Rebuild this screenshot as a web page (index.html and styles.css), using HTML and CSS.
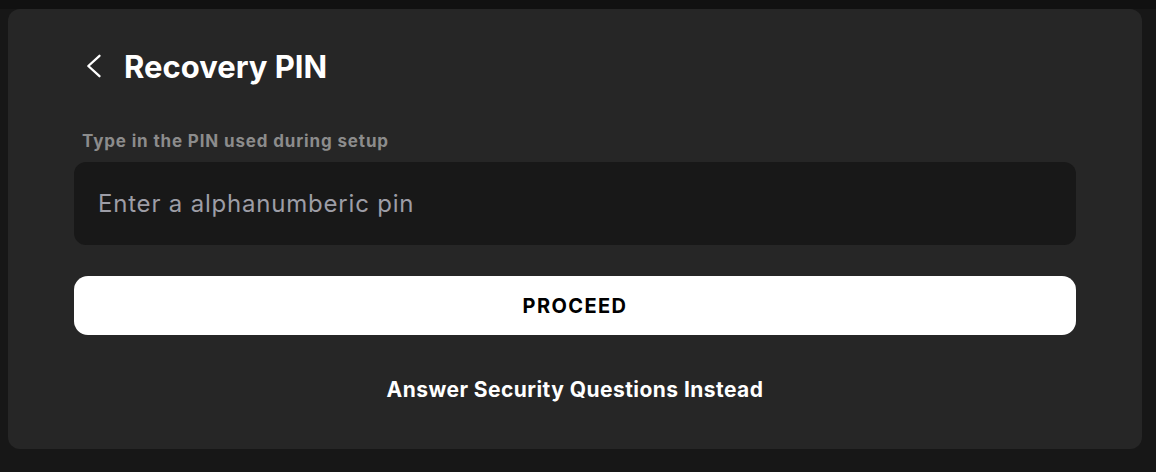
FILE: index.html
```html
<!DOCTYPE html>
<html lang="en">
<head>
<meta charset="utf-8">
<title>Recovery PIN</title>
<link rel="stylesheet" href="styles.css">
</head>
<body>
<div class="topbar"></div>
<main class="card">
  <header class="header">
    <button class="back" aria-label="Back">
      <svg width="16" height="26" viewBox="0 0 16 26" fill="none"><path d="M13.5 2.8 L2.3 13 L13.5 23.2" stroke="#fff" stroke-width="2.3" stroke-linecap="round" stroke-linejoin="round"/></svg>
    </button>
    <h1 class="title">Recovery PIN</h1>
  </header>
  <label class="label" for="pin">Type in the PIN used during setup</label>
  <input id="pin" class="input" type="text" placeholder="Enter a alphanumberic pin">
  <button class="proceed">PROCEED</button>
  <a class="alt" href="#">Answer Security Questions Instead</a>
</main>
</body>
</html>
```
FILE: styles.css
```css
* { box-sizing: border-box; }
html, body { margin: 0; padding: 0; }
body {
  background: #171717;
  font-family: Inter, "Noto Sans", sans-serif;
  height: 472px;
  overflow: hidden;
}
.topbar { height: 9px; background: #111111; }
.card {
  margin: 0 14px 0 8px;
  height: 440px;
  background: #262626;
  border-radius: 12px;
  padding: 40px 66px 0 66px;
  display: flex;
  flex-direction: column;
}
.header {
  display: flex;
  align-items: center;
  gap: 18px;
  height: 34px;
  padding-left: 12px;
}
.back {
  background: none;
  border: 0;
  padding: 0;
  width: 20px;
  height: 26px;
  display: flex;
  align-items: center;
  cursor: pointer;
}
.title {
  margin: 0;
  color: #ffffff;
  font-size: 31px;
  font-weight: 700;
  letter-spacing: 0;
}
.label {
  margin-top: 48px;
  padding-left: 8px;
  color: #8c8c8c;
  font-size: 17px;
  font-weight: 700;
  line-height: 21px;
  letter-spacing: 0.85px;
}
.input {
  margin-top: 10px;
  height: 83px;
  width: 100%;
  background: #181818;
  border: 0;
  border-radius: 12px;
  padding: 0 24px;
  font-family: Inter, "Noto Sans", sans-serif;
  font-size: 24px;
  letter-spacing: 0.8px;
  color: #fff;
  outline: none;
}
.input::placeholder { color: #9d9da6; }
.proceed {
  margin-top: 31px;
  height: 59px;
  width: 100%;
  background: #ffffff;
  border: 0;
  border-radius: 14px;
  font-family: Inter, "Noto Sans", sans-serif;
  font-size: 20px;
  font-weight: 700;
  letter-spacing: 1.4px;
  color: #000;
  cursor: pointer;
}
.alt {
  margin-top: 42px;
  align-self: center;
  color: #ffffff;
  font-size: 21px;
  font-weight: 700;
  text-decoration: none;
  letter-spacing: 0.45px;
  line-height: 26px;
}
```
